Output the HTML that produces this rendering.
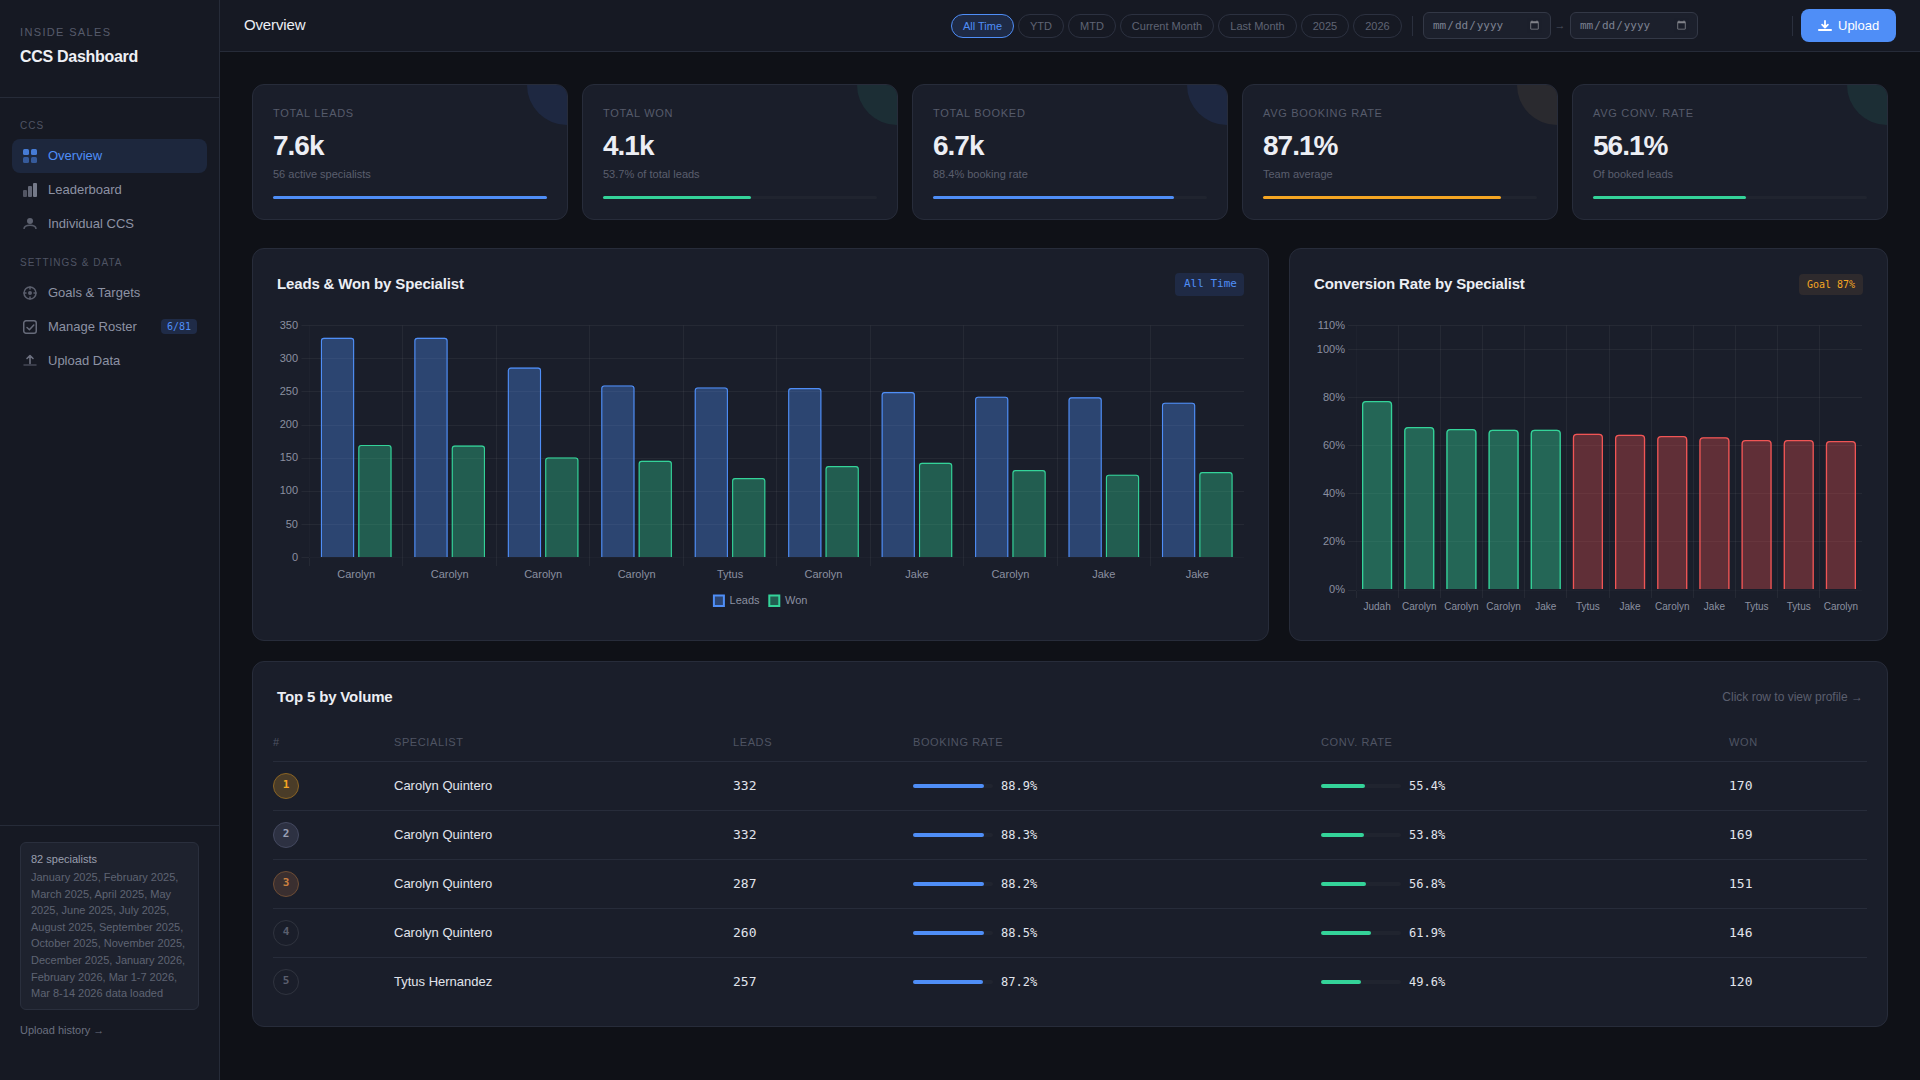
<!DOCTYPE html>
<html lang="en">
<head>
<meta charset="utf-8">
<title>CCS Dashboard</title>
<style>
*{box-sizing:border-box;margin:0;padding:0}
html,body{width:1920px;height:1080px}
body{background:#0f1117;color:#e8eaf0;font-family:"Liberation Sans",sans-serif;font-size:13px;position:relative;color-scheme:dark}
.mono{font-family:"DejaVu Sans Mono","Liberation Mono",monospace}
.abs{position:absolute}

/* ---------- sidebar ---------- */
.sidebar{position:absolute;left:0;top:0;width:220px;height:1080px;background:#161923;border-right:1px solid #262b38}
.sb-eyebrow{position:absolute;left:20px;top:24px;font-size:11px;line-height:16px;letter-spacing:1.35px;color:#565b6b;text-transform:uppercase}
.sb-title{position:absolute;left:20px;top:45px;font-size:16px;line-height:24px;font-weight:700;color:#eef0f5;letter-spacing:-.3px}
.sb-div{position:absolute;left:0;top:97px;width:219px;height:1px;background:#262b38}
.sb-label{position:absolute;left:20px;font-size:10px;line-height:14px;letter-spacing:1px;color:#4f5463;text-transform:uppercase}
.nav{position:absolute;left:12px;width:195px;height:34px;border-radius:8px;color:#8d92a3;font-size:13px;line-height:34px;padding-left:36px}
.nav svg{position:absolute;left:10px;top:9px;width:16px;height:16px}
.nav.active{background:#1d273d;color:#4f8ef7}
.nav .badge{position:absolute;right:10px;top:9px;height:15px;line-height:15px;padding:0 6px;border-radius:4px;background:#1f2b47;color:#4f8ef7;font-size:10px}
.sb-foot-div{position:absolute;left:0;top:825px;width:219px;height:1px;background:#262b38}
.sb-box{position:absolute;left:20px;top:842px;width:179px;height:168px;border:1px solid #2a2f3d;border-radius:6px;background:#1e222e;padding:8px 10px;font-size:11px;line-height:16.6px;color:#5f6473}
.sb-box b{display:block;font-weight:400;color:#9a9fae;line-height:16px;margin-bottom:2px}
.sb-hist{position:absolute;left:20px;top:1022px;font-size:11px;line-height:16px;color:#6b7080}

/* ---------- topbar ---------- */
.topbar{position:absolute;left:220px;top:0;width:1700px;height:52px;background:#161923;border-bottom:1px solid #262b38}
.tb-title{position:absolute;left:24px;top:14px;font-size:15px;line-height:22px;color:#eceef4;letter-spacing:-.15px}
.pill{position:absolute;top:14px;height:24px;border:1px solid #2c3140;border-radius:12px;font-size:11px;line-height:22px;color:#5f6474;text-align:center}
.pill.on{border-color:#4f8ef7;background:#1e2a45;color:#4f8ef7}
.vsep{position:absolute;top:16px;width:1px;height:20px;background:#2a2f3d}
.date{position:absolute;top:12px;width:128px;height:27px;border:1px solid #333846;border-radius:6px;background:#1c202c;color:#7d8292;font-size:11px;padding:0 8px}
.arrow{position:absolute;top:17px;font-size:11px;line-height:16px;color:#4c5160}
.upload{position:absolute;left:1581px;top:9px;width:95px;height:33px;border-radius:8px;background:#4f8ef7;color:#fff;font-size:13px;line-height:33px;padding-left:37px}
.upload svg{position:absolute;left:17px;top:9px;width:14px;height:14px}
.date::-webkit-calendar-picker-indicator{opacity:.45}

/* ---------- cards ---------- */
.card{position:absolute;background:#1a1e2a;border:1px solid #272c3a;border-radius:12px;overflow:hidden}
.kpi{top:84px;width:316px;height:136px}
.kpi .lbl{position:absolute;left:20px;top:20px;font-size:11px;line-height:16px;letter-spacing:.7px;color:#565b6b;text-transform:uppercase}
.kpi .val{position:absolute;left:20px;top:42px;font-size:28px;line-height:38px;font-weight:700;color:#eceef4;letter-spacing:-1px}
.kpi .sub{position:absolute;left:20px;top:81px;font-size:11px;line-height:16px;color:#5a5f6e}
.kpi .track{position:absolute;left:20px;top:111px;width:274px;height:3px;border-radius:2px;background:#20242f}
.kpi .fill{height:3px;border-radius:2px}
.kpi .orb{position:absolute;right:-40px;top:-40px;width:80px;height:80px;border-radius:50%}

/* ---------- charts + table ---------- */
.ctitle{position:absolute;font-size:15px;line-height:22px;font-weight:700;color:#eceef4;letter-spacing:-.15px}
.cbadge{position:absolute;height:23px;line-height:23px;border-radius:4px;font-size:11px;text-align:center}
.chartsvg{position:absolute;left:0;top:0;pointer-events:none}
.thint{position:absolute;font-size:12px;line-height:18px;color:#5a5f6e;text-align:right}
.th{position:absolute;font-size:11px;line-height:16px;letter-spacing:.6px;text-transform:uppercase;color:#4f5463}
.hr{position:absolute;left:273px;width:1594px;height:1px;background:#272c3a}
.td{position:absolute;font-size:13px;line-height:20px;color:#e1e4ec}
.td.pc{font-size:12px}
.rank{position:absolute;width:26px;height:26px;border-radius:50%;border:1px solid #30343f;font-size:11px;line-height:22px;text-align:center;font-weight:700;color:#5a5f6e;font-family:"DejaVu Sans Mono","Liberation Mono",monospace}
.rank.r1{background:#4a3c28;border-color:#8a6424;color:#f5a623}
.rank.r2{background:#2d3142;border-color:#444960;color:#9aa0b5}
.rank.r3{background:#3a2f30;border-color:#6e4d35;color:#cd8140}
.trk{position:absolute;width:80px;height:4px;border-radius:2px;background:#20242f}
.trk div{height:4px;border-radius:2px}
</style>
</head>
<body>

<!-- ================= SIDEBAR ================= -->
<div class="sidebar">
  <div class="sb-eyebrow">Inside Sales</div>
  <div class="sb-title">CCS Dashboard</div>
  <div class="sb-div"></div>

  <div class="sb-label" style="top:119px">CCS</div>
  <div class="nav active" style="top:139px">
    <svg viewBox="0 0 16 16" fill="currentColor"><rect x="1" y="1" width="6" height="6" rx="1.5" opacity=".82"/><rect x="9" y="1" width="6" height="6" rx="1.5" opacity=".82"/><rect x="1" y="9" width="6" height="6" rx="1.5" opacity=".5"/><rect x="9" y="9" width="6" height="6" rx="1.5" opacity=".5"/></svg>Overview</div>
  <div class="nav" style="top:173px">
    <svg viewBox="0 0 16 16" fill="currentColor"><rect x="1" y="8" width="4" height="7" rx="1" opacity=".5"/><rect x="6" y="4" width="4" height="11" rx="1" opacity=".65"/><rect x="11" y="1" width="4" height="14" rx="1" opacity=".8"/></svg>Leaderboard</div>
  <div class="nav" style="top:207px">
    <svg viewBox="0 0 16 16" fill="none" stroke="currentColor"><circle cx="8" cy="5" r="3" fill="currentColor" stroke="none" opacity=".6"/><path d="M2 13c0-2.5 2.7-3.75 6-3.75s6 1.25 6 3.75" stroke-width="1.5" opacity=".55"/></svg>Individual CCS</div>

  <div class="sb-label" style="top:256px">Settings &amp; Data</div>
  <div class="nav" style="top:276px">
    <svg viewBox="0 0 16 16" fill="none" stroke="currentColor" opacity=".58"><circle cx="8" cy="8" r="6" stroke-width="1.5"/><circle cx="8" cy="8" r="2" fill="currentColor" stroke="none"/><path d="M8 2v2M8 12v2M2 8h2M12 8h2" stroke-width="1.5" stroke-linecap="round"/></svg>Goals &amp; Targets</div>
  <div class="nav" style="top:310px">
    <svg viewBox="0 0 16 16" fill="none" stroke="currentColor" opacity=".68"><rect x="1.75" y="1.75" width="12.5" height="12.5" rx="2.25" stroke-width="1.5"/><path d="M5 8.5l2.4 2.3 4.4-4.8" stroke-width="1.5" stroke-linecap="round" stroke-linejoin="round"/></svg>Manage Roster<span class="badge mono">6/81</span></div>
  <div class="nav" style="top:344px">
    <svg viewBox="0 0 16 16" fill="none" stroke="currentColor"><path d="M8 10.5V3M5 5.5l3-3 3 3" stroke-width="1.6" stroke-linecap="round" stroke-linejoin="round" opacity=".72"/><path d="M2 12h12" stroke-width="1.5" stroke-linecap="round" opacity=".4"/></svg>Upload Data</div>

  <div class="sb-foot-div"></div>
  <div class="sb-box"><b>82 specialists</b>January 2025, February 2025, March 2025, April 2025, May 2025, June 2025, July 2025, August 2025, September 2025, October 2025, November 2025, December 2025, January 2026, February 2026, Mar 1-7 2026, Mar 8-14 2026 data loaded</div>
  <div class="sb-hist">Upload history →</div>
</div>

<!-- ================= TOPBAR ================= -->
<div class="topbar">
  <div class="tb-title">Overview</div>
  <div class="pill on" style="left:731px;width:63px">All Time</div>
  <div class="pill" style="left:798px;width:46px">YTD</div>
  <div class="pill" style="left:848px;width:48px">MTD</div>
  <div class="pill" style="left:900px;width:94px">Current Month</div>
  <div class="pill" style="left:998px;width:79px">Last Month</div>
  <div class="pill" style="left:1081px;width:48px">2025</div>
  <div class="pill" style="left:1133px;width:49px">2026</div>
  <div class="vsep" style="left:1192px"></div>
  <input class="date mono" type="date" style="left:1203px">
  <div class="arrow" style="left:1334.5px">→</div>
  <input class="date mono" type="date" style="left:1350px">
  <div class="vsep" style="left:1572px"></div>
  <div class="upload"><svg viewBox="0 0 14 14" fill="none" stroke="#fff" stroke-width="1.8" stroke-linecap="round" stroke-linejoin="round"><path d="M7 3v6M4.1 6.6L7 9.5l2.9-2.9M.9 12h12.2"/></svg>Upload</div>
</div>

<!-- ================= KPI CARDS ================= -->
<div class="card kpi" style="left:252px"><div class="orb" style="background:#1e2841"></div><div class="lbl">Total Leads</div><div class="val">7.6k</div><div class="sub">56 active specialists</div><div class="track"><div class="fill" style="width:100%;background:#4f8ef7"></div></div></div>
<div class="card kpi" style="left:582px"><div class="orb" style="background:#1c2e35"></div><div class="lbl">Total Won</div><div class="val">4.1k</div><div class="sub">53.7% of total leads</div><div class="track"><div class="fill" style="width:54%;background:#34d399"></div></div></div>
<div class="card kpi" style="left:912px"><div class="orb" style="background:#1e2841"></div><div class="lbl">Total Booked</div><div class="val">6.7k</div><div class="sub">88.4% booking rate</div><div class="track"><div class="fill" style="width:88%;background:#4f8ef7"></div></div></div>
<div class="card kpi" style="left:1242px"><div class="orb" style="background:#2a2a2f"></div><div class="lbl">Avg Booking Rate</div><div class="val">87.1%</div><div class="sub">Team average</div><div class="track"><div class="fill" style="width:87%;background:#f5a623"></div></div></div>
<div class="card kpi" style="left:1572px"><div class="orb" style="background:#1c2e35"></div><div class="lbl">Avg Conv. Rate</div><div class="val">56.1%</div><div class="sub">Of booked leads</div><div class="track"><div class="fill" style="width:56%;background:#34d399"></div></div></div>

<div class="card" style="left:252px;top:248px;width:1017px;height:393px"></div>
<div class="card" style="left:1289px;top:248px;width:599px;height:393px"></div>
<div class="ctitle" style="left:277px;top:273px">Leads &amp; Won by Specialist</div>
<div class="cbadge mono" style="left:1175px;top:273px;width:69px;line-height:21px;text-align:left;padding-left:9px;background:#1f2a45;color:#4f8ef7">All Time</div>
<div class="ctitle" style="left:1314px;top:273px">Conversion Rate by Specialist</div>
<div class="cbadge mono" style="left:1799px;top:274px;width:64px;height:21px;line-height:21px;font-size:10px;background:#2e2a2d;color:#f5a623">Goal 87%</div>
<svg class="chartsvg" width="1920" height="1080" viewBox="0 0 1920 1080" font-family="Liberation Sans, sans-serif">
<path d="M301.5 557.5H309" stroke="rgba(255,255,255,0.05)" stroke-width="1"/>
<path d="M310 557.5H1244" stroke="rgba(255,235,255,0.018)" stroke-width="1"/>
<text x="298" y="560.6" text-anchor="end" font-size="11" fill="#8b90a0">0</text>
<path d="M301.5 524.5H1244" stroke="rgba(255,255,255,0.05)" stroke-width="1"/>
<text x="298" y="527.53" text-anchor="end" font-size="11" fill="#8b90a0">50</text>
<path d="M301.5 491.5H1244" stroke="rgba(255,255,255,0.05)" stroke-width="1"/>
<text x="298" y="494.46" text-anchor="end" font-size="11" fill="#8b90a0">100</text>
<path d="M301.5 458.5H1244" stroke="rgba(255,255,255,0.05)" stroke-width="1"/>
<text x="298" y="461.39" text-anchor="end" font-size="11" fill="#8b90a0">150</text>
<path d="M301.5 425.5H1244" stroke="rgba(255,255,255,0.05)" stroke-width="1"/>
<text x="298" y="428.31" text-anchor="end" font-size="11" fill="#8b90a0">200</text>
<path d="M301.5 391.5H1244" stroke="rgba(255,255,255,0.05)" stroke-width="1"/>
<text x="298" y="395.24" text-anchor="end" font-size="11" fill="#8b90a0">250</text>
<path d="M301.5 358.5H1244" stroke="rgba(255,255,255,0.05)" stroke-width="1"/>
<text x="298" y="362.17" text-anchor="end" font-size="11" fill="#8b90a0">300</text>
<path d="M301.5 325.5H1244" stroke="rgba(255,255,255,0.05)" stroke-width="1"/>
<text x="298" y="329.1" text-anchor="end" font-size="11" fill="#8b90a0">350</text>
<path d="M309.5 325.5V557" stroke="rgba(255,235,255,0.018)" stroke-width="1"/>
<path d="M309.5 558V566" stroke="rgba(255,255,255,0.05)" stroke-width="1"/>
<path d="M402.5 325.5V566" stroke="rgba(255,255,255,0.05)" stroke-width="1"/>
<path d="M496.5 325.5V566" stroke="rgba(255,255,255,0.05)" stroke-width="1"/>
<path d="M589.5 325.5V566" stroke="rgba(255,255,255,0.05)" stroke-width="1"/>
<path d="M683.5 325.5V566" stroke="rgba(255,255,255,0.05)" stroke-width="1"/>
<path d="M776.5 325.5V566" stroke="rgba(255,255,255,0.05)" stroke-width="1"/>
<path d="M870.5 325.5V566" stroke="rgba(255,255,255,0.05)" stroke-width="1"/>
<path d="M963.5 325.5V566" stroke="rgba(255,255,255,0.05)" stroke-width="1"/>
<path d="M1057.5 325.5V566" stroke="rgba(255,255,255,0.05)" stroke-width="1"/>
<path d="M1150.5 325.5V566" stroke="rgba(255,255,255,0.05)" stroke-width="1"/>
<path d="M320.91 557V340.81Q320.91 337.81 323.91 337.81H351.16Q354.16 337.81 354.16 340.81V557Z" fill="rgba(79,142,247,0.35)"/><path d="M321.46 557V340.81Q321.46 338.36 323.91 338.36H351.16Q353.61 338.36 353.61 340.81V557" fill="none" stroke="#4f8ef7" stroke-width="1.1"/>
<path d="M358.29 557V447.96Q358.29 444.96 361.29 444.96H388.54Q391.54 444.96 391.54 447.96V557Z" fill="rgba(52,211,153,0.35)"/><path d="M358.84 557V447.96Q358.84 445.51 361.29 445.51H388.54Q390.99 445.51 390.99 447.96V557" fill="none" stroke="#34d399" stroke-width="1.1"/>
<text x="356.23" y="578" text-anchor="middle" font-size="11" fill="#8b90a0">Carolyn</text>
<path d="M414.36 557V340.81Q414.36 337.81 417.36 337.81H444.61Q447.61 337.81 447.61 340.81V557Z" fill="rgba(79,142,247,0.35)"/><path d="M414.91 557V340.81Q414.91 338.36 417.36 338.36H444.61Q447.06 338.36 447.06 340.81V557" fill="none" stroke="#4f8ef7" stroke-width="1.1"/>
<path d="M451.74 557V448.62Q451.74 445.62 454.74 445.62H481.99Q484.99 445.62 484.99 448.62V557Z" fill="rgba(52,211,153,0.35)"/><path d="M452.29 557V448.62Q452.29 446.17 454.74 446.17H481.99Q484.44 446.17 484.44 448.62V557" fill="none" stroke="#34d399" stroke-width="1.1"/>
<text x="449.68" y="578" text-anchor="middle" font-size="11" fill="#8b90a0">Carolyn</text>
<path d="M507.81 557V370.57Q507.81 367.57 510.81 367.57H538.06Q541.06 367.57 541.06 370.57V557Z" fill="rgba(79,142,247,0.35)"/><path d="M508.36 557V370.57Q508.36 368.12 510.81 368.12H538.06Q540.51 368.12 540.51 370.57V557" fill="none" stroke="#4f8ef7" stroke-width="1.1"/>
<path d="M545.19 557V460.52Q545.19 457.52 548.19 457.52H575.44Q578.44 457.52 578.44 460.52V557Z" fill="rgba(52,211,153,0.35)"/><path d="M545.74 557V460.52Q545.74 458.07 548.19 458.07H575.44Q577.89 458.07 577.89 460.52V557" fill="none" stroke="#34d399" stroke-width="1.1"/>
<text x="543.12" y="578" text-anchor="middle" font-size="11" fill="#8b90a0">Carolyn</text>
<path d="M601.26 557V388.43Q601.26 385.43 604.26 385.43H631.51Q634.51 385.43 634.51 388.43V557Z" fill="rgba(79,142,247,0.35)"/><path d="M601.81 557V388.43Q601.81 385.98 604.26 385.98H631.51Q633.96 385.98 633.96 388.43V557" fill="none" stroke="#4f8ef7" stroke-width="1.1"/>
<path d="M638.64 557V463.83Q638.64 460.83 641.64 460.83H668.89Q671.89 460.83 671.89 463.83V557Z" fill="rgba(52,211,153,0.35)"/><path d="M639.19 557V463.83Q639.19 461.38 641.64 461.38H668.89Q671.34 461.38 671.34 463.83V557" fill="none" stroke="#34d399" stroke-width="1.1"/>
<text x="636.58" y="578" text-anchor="middle" font-size="11" fill="#8b90a0">Carolyn</text>
<path d="M694.71 557V390.41Q694.71 387.41 697.71 387.41H724.96Q727.96 387.41 727.96 390.41V557Z" fill="rgba(79,142,247,0.35)"/><path d="M695.26 557V390.41Q695.26 387.96 697.71 387.96H724.96Q727.41 387.96 727.41 390.41V557" fill="none" stroke="#4f8ef7" stroke-width="1.1"/>
<path d="M732.09 557V481.03Q732.09 478.03 735.09 478.03H762.34Q765.34 478.03 765.34 481.03V557Z" fill="rgba(52,211,153,0.35)"/><path d="M732.64 557V481.03Q732.64 478.58 735.09 478.58H762.34Q764.79 478.58 764.79 481.03V557" fill="none" stroke="#34d399" stroke-width="1.1"/>
<text x="730.03" y="578" text-anchor="middle" font-size="11" fill="#8b90a0">Tytus</text>
<path d="M788.16 557V391.07Q788.16 388.07 791.16 388.07H818.41Q821.41 388.07 821.41 391.07V557Z" fill="rgba(79,142,247,0.35)"/><path d="M788.71 557V391.07Q788.71 388.62 791.16 388.62H818.41Q820.86 388.62 820.86 391.07V557" fill="none" stroke="#4f8ef7" stroke-width="1.1"/>
<path d="M825.54 557V469.12Q825.54 466.12 828.54 466.12H855.79Q858.79 466.12 858.79 469.12V557Z" fill="rgba(52,211,153,0.35)"/><path d="M826.09 557V469.12Q826.09 466.67 828.54 466.67H855.79Q858.24 466.67 858.24 469.12V557" fill="none" stroke="#34d399" stroke-width="1.1"/>
<text x="823.48" y="578" text-anchor="middle" font-size="11" fill="#8b90a0">Carolyn</text>
<path d="M881.61 557V395.04Q881.61 392.04 884.61 392.04H911.86Q914.86 392.04 914.86 395.04V557Z" fill="rgba(79,142,247,0.35)"/><path d="M882.16 557V395.04Q882.16 392.59 884.61 392.59H911.86Q914.31 392.59 914.31 395.04V557" fill="none" stroke="#4f8ef7" stroke-width="1.1"/>
<path d="M918.99 557V465.82Q918.99 462.82 921.99 462.82H949.24Q952.24 462.82 952.24 465.82V557Z" fill="rgba(52,211,153,0.35)"/><path d="M919.54 557V465.82Q919.54 463.37 921.99 463.37H949.24Q951.69 463.37 951.69 465.82V557" fill="none" stroke="#34d399" stroke-width="1.1"/>
<text x="916.93" y="578" text-anchor="middle" font-size="11" fill="#8b90a0">Jake</text>
<path d="M975.06 557V399.67Q975.06 396.67 978.06 396.67H1005.31Q1008.31 396.67 1008.31 399.67V557Z" fill="rgba(79,142,247,0.35)"/><path d="M975.61 557V399.67Q975.61 397.22 978.06 397.22H1005.31Q1007.76 397.22 1007.76 399.67V557" fill="none" stroke="#4f8ef7" stroke-width="1.1"/>
<path d="M1012.44 557V473.09Q1012.44 470.09 1015.44 470.09H1042.69Q1045.69 470.09 1045.69 473.09V557Z" fill="rgba(52,211,153,0.35)"/><path d="M1012.99 557V473.09Q1012.99 470.64 1015.44 470.64H1042.69Q1045.14 470.64 1045.14 473.09V557" fill="none" stroke="#34d399" stroke-width="1.1"/>
<text x="1010.38" y="578" text-anchor="middle" font-size="11" fill="#8b90a0">Carolyn</text>
<path d="M1068.51 557V400.33Q1068.51 397.33 1071.51 397.33H1098.76Q1101.76 397.33 1101.76 400.33V557Z" fill="rgba(79,142,247,0.35)"/><path d="M1069.06 557V400.33Q1069.06 397.88 1071.51 397.88H1098.76Q1101.21 397.88 1101.21 400.33V557" fill="none" stroke="#4f8ef7" stroke-width="1.1"/>
<path d="M1105.89 557V477.72Q1105.89 474.72 1108.89 474.72H1136.14Q1139.14 474.72 1139.14 477.72V557Z" fill="rgba(52,211,153,0.35)"/><path d="M1106.44 557V477.72Q1106.44 475.27 1108.89 475.27H1136.14Q1138.59 475.27 1138.59 477.72V557" fill="none" stroke="#34d399" stroke-width="1.1"/>
<text x="1103.83" y="578" text-anchor="middle" font-size="11" fill="#8b90a0">Jake</text>
<path d="M1161.96 557V405.63Q1161.96 402.63 1164.96 402.63H1192.21Q1195.21 402.63 1195.21 405.63V557Z" fill="rgba(79,142,247,0.35)"/><path d="M1162.51 557V405.63Q1162.51 403.18 1164.96 403.18H1192.21Q1194.66 403.18 1194.66 405.63V557" fill="none" stroke="#4f8ef7" stroke-width="1.1"/>
<path d="M1199.34 557V475.08Q1199.34 472.08 1202.34 472.08H1229.59Q1232.59 472.08 1232.59 475.08V557Z" fill="rgba(52,211,153,0.35)"/><path d="M1199.89 557V475.08Q1199.89 472.63 1202.34 472.63H1229.59Q1232.04 472.63 1232.04 475.08V557" fill="none" stroke="#34d399" stroke-width="1.1"/>
<text x="1197.28" y="578" text-anchor="middle" font-size="11" fill="#8b90a0">Jake</text>
<rect x="713.9" y="595.5" width="10" height="10.500" fill="rgba(79,142,247,0.35)" stroke="#4f8ef7" stroke-width="2"/>
<text x="729.6" y="604.300" font-size="11" fill="#8b90a0">Leads</text>
<rect x="769.3" y="595.5" width="10" height="10.500" fill="rgba(52,211,153,0.35)" stroke="#34d399" stroke-width="2"/>
<text x="785" y="604.300" font-size="11" fill="#8b90a0">Won</text>
<path d="M1348 590.5H1356" stroke="rgba(255,255,255,0.05)" stroke-width="1"/>
<path d="M1357 590.5H1862" stroke="rgba(255,235,255,0.018)" stroke-width="1"/>
<text x="1345" y="592.7" text-anchor="end" font-size="11" fill="#8b90a0">0%</text>
<path d="M1348 541.5H1862" stroke="rgba(255,255,255,0.05)" stroke-width="1"/>
<text x="1345" y="544.79" text-anchor="end" font-size="11" fill="#8b90a0">20%</text>
<path d="M1348 493.5H1862" stroke="rgba(255,255,255,0.05)" stroke-width="1"/>
<text x="1345" y="496.88" text-anchor="end" font-size="11" fill="#8b90a0">40%</text>
<path d="M1348 445.5H1862" stroke="rgba(255,255,255,0.05)" stroke-width="1"/>
<text x="1345" y="448.97" text-anchor="end" font-size="11" fill="#8b90a0">60%</text>
<path d="M1348 397.5H1862" stroke="rgba(255,255,255,0.05)" stroke-width="1"/>
<text x="1345" y="401.06" text-anchor="end" font-size="11" fill="#8b90a0">80%</text>
<path d="M1348 349.5H1862" stroke="rgba(255,255,255,0.05)" stroke-width="1"/>
<text x="1345" y="353.15" text-anchor="end" font-size="11" fill="#8b90a0">100%</text>
<path d="M1348 325.5H1862" stroke="rgba(255,255,255,0.05)" stroke-width="1"/>
<text x="1345" y="329.2" text-anchor="end" font-size="11" fill="#8b90a0">110%</text>
<path d="M1356.5 325.5V590" stroke="rgba(255,235,255,0.018)" stroke-width="1"/>
<path d="M1356.5 591V598" stroke="rgba(255,255,255,0.05)" stroke-width="1"/>
<path d="M1398.5 325.5V598" stroke="rgba(255,255,255,0.05)" stroke-width="1"/>
<path d="M1440.5 325.5V598" stroke="rgba(255,255,255,0.05)" stroke-width="1"/>
<path d="M1482.5 325.5V598" stroke="rgba(255,255,255,0.05)" stroke-width="1"/>
<path d="M1524.5 325.5V598" stroke="rgba(255,255,255,0.05)" stroke-width="1"/>
<path d="M1566.5 325.5V598" stroke="rgba(255,255,255,0.05)" stroke-width="1"/>
<path d="M1609.5 325.5V598" stroke="rgba(255,255,255,0.05)" stroke-width="1"/>
<path d="M1651.5 325.5V598" stroke="rgba(255,255,255,0.05)" stroke-width="1"/>
<path d="M1693.5 325.5V598" stroke="rgba(255,255,255,0.05)" stroke-width="1"/>
<path d="M1735.5 325.5V598" stroke="rgba(255,255,255,0.05)" stroke-width="1"/>
<path d="M1777.5 325.5V598" stroke="rgba(255,255,255,0.05)" stroke-width="1"/>
<path d="M1819.5 325.5V598" stroke="rgba(255,255,255,0.05)" stroke-width="1"/>
<path d="M1362 589V405Q1362 401 1366 401H1388.16Q1392.16 401 1392.16 405V589Z" fill="rgba(52,211,153,0.40)"/><path d="M1362.65 589V405Q1362.65 401.65 1366 401.65H1388.16Q1391.51 401.65 1391.51 405V589" fill="none" stroke="#34d399" stroke-width="1.3"/>
<text x="1377.08" y="610.400" text-anchor="middle" font-size="10" fill="#8b90a0">Judah</text>
<path d="M1404.17 589V430.9Q1404.17 426.9 1408.17 426.9H1430.33Q1434.33 426.9 1434.33 430.9V589Z" fill="rgba(52,211,153,0.40)"/><path d="M1404.82 589V430.9Q1404.82 427.55 1408.17 427.55H1430.33Q1433.68 427.55 1433.68 430.9V589" fill="none" stroke="#34d399" stroke-width="1.3"/>
<text x="1419.25" y="610.400" text-anchor="middle" font-size="10" fill="#8b90a0">Carolyn</text>
<path d="M1446.34 589V432.9Q1446.34 428.9 1450.34 428.9H1472.5Q1476.5 428.9 1476.5 432.9V589Z" fill="rgba(52,211,153,0.40)"/><path d="M1446.99 589V432.9Q1446.99 429.55 1450.34 429.55H1472.5Q1475.85 429.55 1475.85 432.9V589" fill="none" stroke="#34d399" stroke-width="1.3"/>
<text x="1461.42" y="610.400" text-anchor="middle" font-size="10" fill="#8b90a0">Carolyn</text>
<path d="M1488.5 589V433.8Q1488.5 429.8 1492.5 429.8H1514.66Q1518.66 429.8 1518.66 433.8V589Z" fill="rgba(52,211,153,0.40)"/><path d="M1489.15 589V433.8Q1489.15 430.45 1492.5 430.45H1514.66Q1518.01 430.45 1518.01 433.8V589" fill="none" stroke="#34d399" stroke-width="1.3"/>
<text x="1503.58" y="610.400" text-anchor="middle" font-size="10" fill="#8b90a0">Carolyn</text>
<path d="M1530.67 589V433.8Q1530.67 429.8 1534.67 429.8H1556.83Q1560.83 429.8 1560.83 433.8V589Z" fill="rgba(52,211,153,0.40)"/><path d="M1531.32 589V433.8Q1531.32 430.45 1534.67 430.45H1556.83Q1560.18 430.45 1560.18 433.8V589" fill="none" stroke="#34d399" stroke-width="1.3"/>
<text x="1545.75" y="610.400" text-anchor="middle" font-size="10" fill="#8b90a0">Jake</text>
<path d="M1572.84 589V437.8Q1572.84 433.8 1576.84 433.8H1599Q1603 433.8 1603 437.8V589Z" fill="rgba(240,82,82,0.33)"/><path d="M1573.49 589V437.8Q1573.49 434.45 1576.84 434.45H1599Q1602.35 434.45 1602.35 437.8V589" fill="none" stroke="#f05555" stroke-width="1.3"/>
<text x="1587.92" y="610.400" text-anchor="middle" font-size="10" fill="#8b90a0">Tytus</text>
<path d="M1615 589V438.7Q1615 434.7 1619 434.7H1641.16Q1645.16 434.7 1645.16 438.7V589Z" fill="rgba(240,82,82,0.33)"/><path d="M1615.65 589V438.7Q1615.65 435.35 1619 435.35H1641.16Q1644.51 435.35 1644.51 438.7V589" fill="none" stroke="#f05555" stroke-width="1.3"/>
<text x="1630.08" y="610.400" text-anchor="middle" font-size="10" fill="#8b90a0">Jake</text>
<path d="M1657.17 589V439.9Q1657.17 435.9 1661.17 435.9H1683.33Q1687.33 435.9 1687.33 439.9V589Z" fill="rgba(240,82,82,0.33)"/><path d="M1657.82 589V439.9Q1657.82 436.55 1661.17 436.55H1683.33Q1686.68 436.55 1686.68 439.9V589" fill="none" stroke="#f05555" stroke-width="1.3"/>
<text x="1672.25" y="610.400" text-anchor="middle" font-size="10" fill="#8b90a0">Carolyn</text>
<path d="M1699.34 589V441.2Q1699.34 437.2 1703.34 437.2H1725.5Q1729.5 437.2 1729.5 441.2V589Z" fill="rgba(240,82,82,0.33)"/><path d="M1699.99 589V441.2Q1699.99 437.85 1703.34 437.85H1725.5Q1728.85 437.85 1728.85 441.2V589" fill="none" stroke="#f05555" stroke-width="1.3"/>
<text x="1714.42" y="610.400" text-anchor="middle" font-size="10" fill="#8b90a0">Jake</text>
<path d="M1741.5 589V444Q1741.5 440 1745.5 440H1767.66Q1771.66 440 1771.66 444V589Z" fill="rgba(240,82,82,0.33)"/><path d="M1742.15 589V444Q1742.15 440.65 1745.5 440.65H1767.66Q1771.01 440.65 1771.01 444V589" fill="none" stroke="#f05555" stroke-width="1.3"/>
<text x="1756.58" y="610.400" text-anchor="middle" font-size="10" fill="#8b90a0">Tytus</text>
<path d="M1783.67 589V444Q1783.67 440 1787.67 440H1809.83Q1813.83 440 1813.83 444V589Z" fill="rgba(240,82,82,0.33)"/><path d="M1784.32 589V444Q1784.32 440.65 1787.67 440.65H1809.83Q1813.18 440.65 1813.18 444V589" fill="none" stroke="#f05555" stroke-width="1.3"/>
<text x="1798.75" y="610.400" text-anchor="middle" font-size="10" fill="#8b90a0">Tytus</text>
<path d="M1825.84 589V445Q1825.84 441 1829.84 441H1852Q1856 441 1856 445V589Z" fill="rgba(240,82,82,0.33)"/><path d="M1826.49 589V445Q1826.49 441.65 1829.84 441.65H1852Q1855.35 441.65 1855.35 445V589" fill="none" stroke="#f05555" stroke-width="1.3"/>
<text x="1840.92" y="610.400" text-anchor="middle" font-size="10" fill="#8b90a0">Carolyn</text>
</svg>
<div class="card" style="left:252px;top:661px;width:1636px;height:366px"></div>
<div class="ctitle" style="left:277px;top:686px">Top 5 by Volume</div>
<div class="thint" style="left:1563px;top:688px;width:300px">Click row to view profile →</div>
<div class="th" style="left:273px;top:734px">#</div>
<div class="th" style="left:394px;top:734px">Specialist</div>
<div class="th" style="left:733px;top:734px">Leads</div>
<div class="th" style="left:913px;top:734px">Booking Rate</div>
<div class="th" style="left:1321px;top:734px">Conv. Rate</div>
<div class="th" style="left:1729px;top:734px">Won</div>
<div class="hr" style="top:761px"></div>
<div class="rank r1" style="left:273px;top:773px">1</div>
<div class="td" style="left:394px;top:776px">Carolyn Quintero</div>
<div class="td mono" style="left:733px;top:776px">332</div>
<div class="trk" style="left:913px;top:784px"><div style="width:71.1px;background:#4f8ef7"></div></div>
<div class="td mono pc" style="left:1001px;top:776px">88.9%</div>
<div class="trk" style="left:1321px;top:784px"><div style="width:44.3px;background:#34d399"></div></div>
<div class="td mono pc" style="left:1409px;top:776px">55.4%</div>
<div class="td mono" style="left:1729px;top:776px">170</div>
<div class="hr" style="top:810px"></div>
<div class="rank r2" style="left:273px;top:822px">2</div>
<div class="td" style="left:394px;top:825px">Carolyn Quintero</div>
<div class="td mono" style="left:733px;top:825px">332</div>
<div class="trk" style="left:913px;top:833px"><div style="width:70.6px;background:#4f8ef7"></div></div>
<div class="td mono pc" style="left:1001px;top:825px">88.3%</div>
<div class="trk" style="left:1321px;top:833px"><div style="width:43.0px;background:#34d399"></div></div>
<div class="td mono pc" style="left:1409px;top:825px">53.8%</div>
<div class="td mono" style="left:1729px;top:825px">169</div>
<div class="hr" style="top:859px"></div>
<div class="rank r3" style="left:273px;top:871px">3</div>
<div class="td" style="left:394px;top:874px">Carolyn Quintero</div>
<div class="td mono" style="left:733px;top:874px">287</div>
<div class="trk" style="left:913px;top:882px"><div style="width:70.6px;background:#4f8ef7"></div></div>
<div class="td mono pc" style="left:1001px;top:874px">88.2%</div>
<div class="trk" style="left:1321px;top:882px"><div style="width:45.4px;background:#34d399"></div></div>
<div class="td mono pc" style="left:1409px;top:874px">56.8%</div>
<div class="td mono" style="left:1729px;top:874px">151</div>
<div class="hr" style="top:908px"></div>
<div class="rank r4" style="left:273px;top:920px">4</div>
<div class="td" style="left:394px;top:923px">Carolyn Quintero</div>
<div class="td mono" style="left:733px;top:923px">260</div>
<div class="trk" style="left:913px;top:931px"><div style="width:70.8px;background:#4f8ef7"></div></div>
<div class="td mono pc" style="left:1001px;top:923px">88.5%</div>
<div class="trk" style="left:1321px;top:931px"><div style="width:49.5px;background:#34d399"></div></div>
<div class="td mono pc" style="left:1409px;top:923px">61.9%</div>
<div class="td mono" style="left:1729px;top:923px">146</div>
<div class="hr" style="top:957px"></div>
<div class="rank r5" style="left:273px;top:969px">5</div>
<div class="td" style="left:394px;top:972px">Tytus Hernandez</div>
<div class="td mono" style="left:733px;top:972px">257</div>
<div class="trk" style="left:913px;top:980px"><div style="width:69.8px;background:#4f8ef7"></div></div>
<div class="td mono pc" style="left:1001px;top:972px">87.2%</div>
<div class="trk" style="left:1321px;top:980px"><div style="width:39.7px;background:#34d399"></div></div>
<div class="td mono pc" style="left:1409px;top:972px">49.6%</div>
<div class="td mono" style="left:1729px;top:972px">120</div>

</body>
</html>
